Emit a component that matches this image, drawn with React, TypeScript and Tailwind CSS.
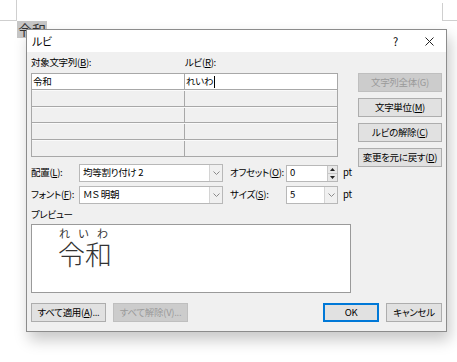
import React from "react";

const Btn = ({ children, disabled, def, className = "" }: { children: React.ReactNode; disabled?: boolean; def?: boolean; className?: string }) => (
  <div
    className={
      "flex items-center justify-center h-[19px] leading-none whitespace-nowrap " +
      (disabled
        ? "bg-[#cccccc] border border-[#bfbfbf] text-[#9a9a9a] "
        : def
        ? "bg-[#e1e1e1] border-2 border-[#0078d7] text-black "
        : "bg-[#e1e1e1] border border-[#adadad] text-black ") +
      className
    }
  >
    {children}
  </div>
);

const U = ({ children }: { children: React.ReactNode }) => <span className="underline underline-offset-1">{children}</span>;

const Chevron = () => (
  <svg width="7" height="4" viewBox="0 0 7 4" className="block">
    <polyline points="0.5,0.5 3.5,3.5 6.5,0.5" fill="none" stroke="#8a8a8a" strokeWidth="1" />
  </svg>
);

const Combo = ({ text, w }: { text: string; w: string }) => (
  <div className={"flex h-[18px] bg-white border border-[#b8b8b8] shrink-0 " + w}>
    <div className="flex-1 flex items-center pl-[3px] leading-none whitespace-nowrap">{text}</div>
    <div className="w-[13px] flex items-center justify-center bg-[#f0f0f0] border-l border-[#d4d4d4]">
      <Chevron />
    </div>
  </div>
);

export default function App() {
  return (
    <div className="relative w-[457px] h-[362px] bg-white overflow-hidden text-[9.5px] tracking-[-0.3px] text-black font-['Noto_Sans_CJK_JP','Noto_Sans',sans-serif] [font-feature-settings:'palt']">
      {/* page corner marks */}
      <div className="absolute left-0 top-[20px] w-[16px] h-px bg-[#cfcfcf]" />
      <div className="absolute left-[16px] top-0 w-px h-[21px] bg-[#cfcfcf]" />
      <div className="absolute left-[442px] top-[3px] w-px h-[18px] bg-[#cfcfcf]" />
      <div className="absolute left-[442px] top-[20px] w-[15px] h-px bg-[#cfcfcf]" />
      {/* document text */}
      <div className="absolute left-[17px] top-[21px] h-[17px] w-[30px] bg-[#c6c6c6] text-[14px] tracking-normal leading-[17px] text-[#333] pl-[1px]">令和</div>

      {/* dialog */}
      <div className="absolute left-[26px] top-[29px] w-[421px] h-[303px] border border-[#8c8c8c] bg-[#f0f0f0] flex flex-col shadow-[3px_8px_14px_rgba(0,0,0,0.22)]">
        {/* title bar */}
        <div className="h-[22px] bg-white flex items-center pl-[5px] shrink-0">
          <span className="text-[11px] leading-none">ルビ</span>
          <span className="ml-auto text-[11px] leading-none mr-[27px]">?</span>
          <svg width="9" height="9" viewBox="0 0 9 9" className="mr-[12px]">
            <path d="M0.5 0.5 L8.5 8.5 M8.5 0.5 L0.5 8.5" stroke="#222" strokeWidth="1" />
          </svg>
        </div>

        <div className="flex-1 flex flex-col px-[4px]">
          <div className="flex gap-[7px]">
            {/* main column */}
            <div className="w-[320px] flex flex-col pt-[5px]">
              <div className="flex h-[12px] items-center leading-none mb-[4px] whitespace-nowrap">
                <div className="w-[154px]">対象文字列(<U>B</U>):</div>
                <div>ルビ(<U>R</U>):</div>
              </div>
              {/* table */}
              <div className="w-[307px] border border-[#a8a8a8] flex flex-col">
                {[16, 17, 16, 17, 16].map((h, i) => (
                  <div
                    key={i}
                    className={
                      "flex " +
                      (i < 4 ? "border-b border-[#a8a8a8] " : "") +
                      (i === 0 ? "bg-white" : "bg-[#f0f0f0] border-t border-t-[#fafafa]")
                    }
                    style={{ height: h }}
                  >
                    <div className="w-[153px] border-r border-[#a8a8a8] flex items-center pl-[1px] leading-none">
                      {i === 0 ? "令和" : ""}
                    </div>
                    <div className="flex-1 flex items-center pl-[1px] leading-none">
                      {i === 0 ? (
                        <>
                          <span>れいわ</span>
                          <span className="w-px h-[12px] bg-black ml-[1px]" />
                        </>
                      ) : null}
                    </div>
                  </div>
                ))}
              </div>

              {/* 配置 row */}
              <div className="flex items-center mt-[7px] h-[18px] whitespace-nowrap">
                <div className="w-[48px] shrink-0 leading-none">配置(<U>L</U>):</div>
                <Combo text="均等割り付け 2" w="w-[144px]" />
                <div className="w-[56px] shrink-0 ml-[7px] leading-none">オフセット(<U>O</U>):</div>
                <div className="flex h-[17px] w-[52px] shrink-0 bg-white border border-[#b8b8b8]">
                  <div className="flex-1 flex items-center pl-[3px] leading-none">0</div>
                  <div className="w-[10px] flex flex-col bg-[#e8e8e8] border-l border-[#c8c8c8]">
                    <div className="flex-1 flex items-center justify-center border-b border-[#c8c8c8]">
                      <svg width="5" height="3" viewBox="0 0 5 3"><polygon points="2.5,0 5,3 0,3" fill="#222" /></svg>
                    </div>
                    <div className="flex-1 flex items-center justify-center">
                      <svg width="5" height="3" viewBox="0 0 5 3"><polygon points="0,0 5,0 2.5,3" fill="#222" /></svg>
                    </div>
                  </div>
                </div>
                <div className="ml-[5px] leading-none">pt</div>
              </div>

              {/* フォント row */}
              <div className="flex items-center mt-[4px] h-[18px] whitespace-nowrap">
                <div className="w-[48px] shrink-0 leading-none">フォント(<U>F</U>):</div>
                <Combo text="ＭＳ 明朝" w="w-[144px]" />
                <div className="w-[56px] shrink-0 ml-[7px] leading-none">サイズ(<U>S</U>):</div>
                <Combo text="5" w="w-[52px]" />
                <div className="ml-[5px] leading-none">pt</div>
              </div>

              <div className="mt-[5px] h-[12px] leading-none flex items-center">プレビュー</div>

              {/* preview */}
              <div className="mt-[3px] h-[69px] w-[320px] bg-white border border-[#9a9a9a] pl-[26px] pt-[2px] flex flex-col tracking-normal">
                <div className="flex w-[50px] justify-between text-[11px] leading-[12px] [font-feature-settings:normal] text-[#333] pl-[1px]">
                  <span>れ</span>
                  <span>い</span>
                  <span>わ</span>
                </div>
                <div className="text-[27px] leading-[28px] mt-[1px] text-[#333] font-light [font-feature-settings:normal]">令和</div>
              </div>
            </div>

            {/* right buttons */}
            <div className="w-[84px] flex flex-col gap-[6px] pt-[21px]">
              <Btn disabled>文字列全体(G)</Btn>
              <Btn>文字単位(<U>M</U>)</Btn>
              <Btn>ルビの解除(<U>C</U>)</Btn>
              <Btn>変更を元に戻す(<U>D</U>)</Btn>
            </div>
          </div>

          {/* bottom buttons */}
          <div className="flex items-center mt-[10px]">
            <Btn className="w-[75px]">すべて適用(<U>A</U>)...</Btn>
            <Btn disabled className="w-[75px] ml-[7px]">すべて解除(V)...</Btn>
            <Btn def className="w-[56px] ml-auto">OK</Btn>
            <Btn className="w-[56px] ml-[7px]">キャンセル</Btn>
          </div>
        </div>
      </div>
    </div>
  );
}
